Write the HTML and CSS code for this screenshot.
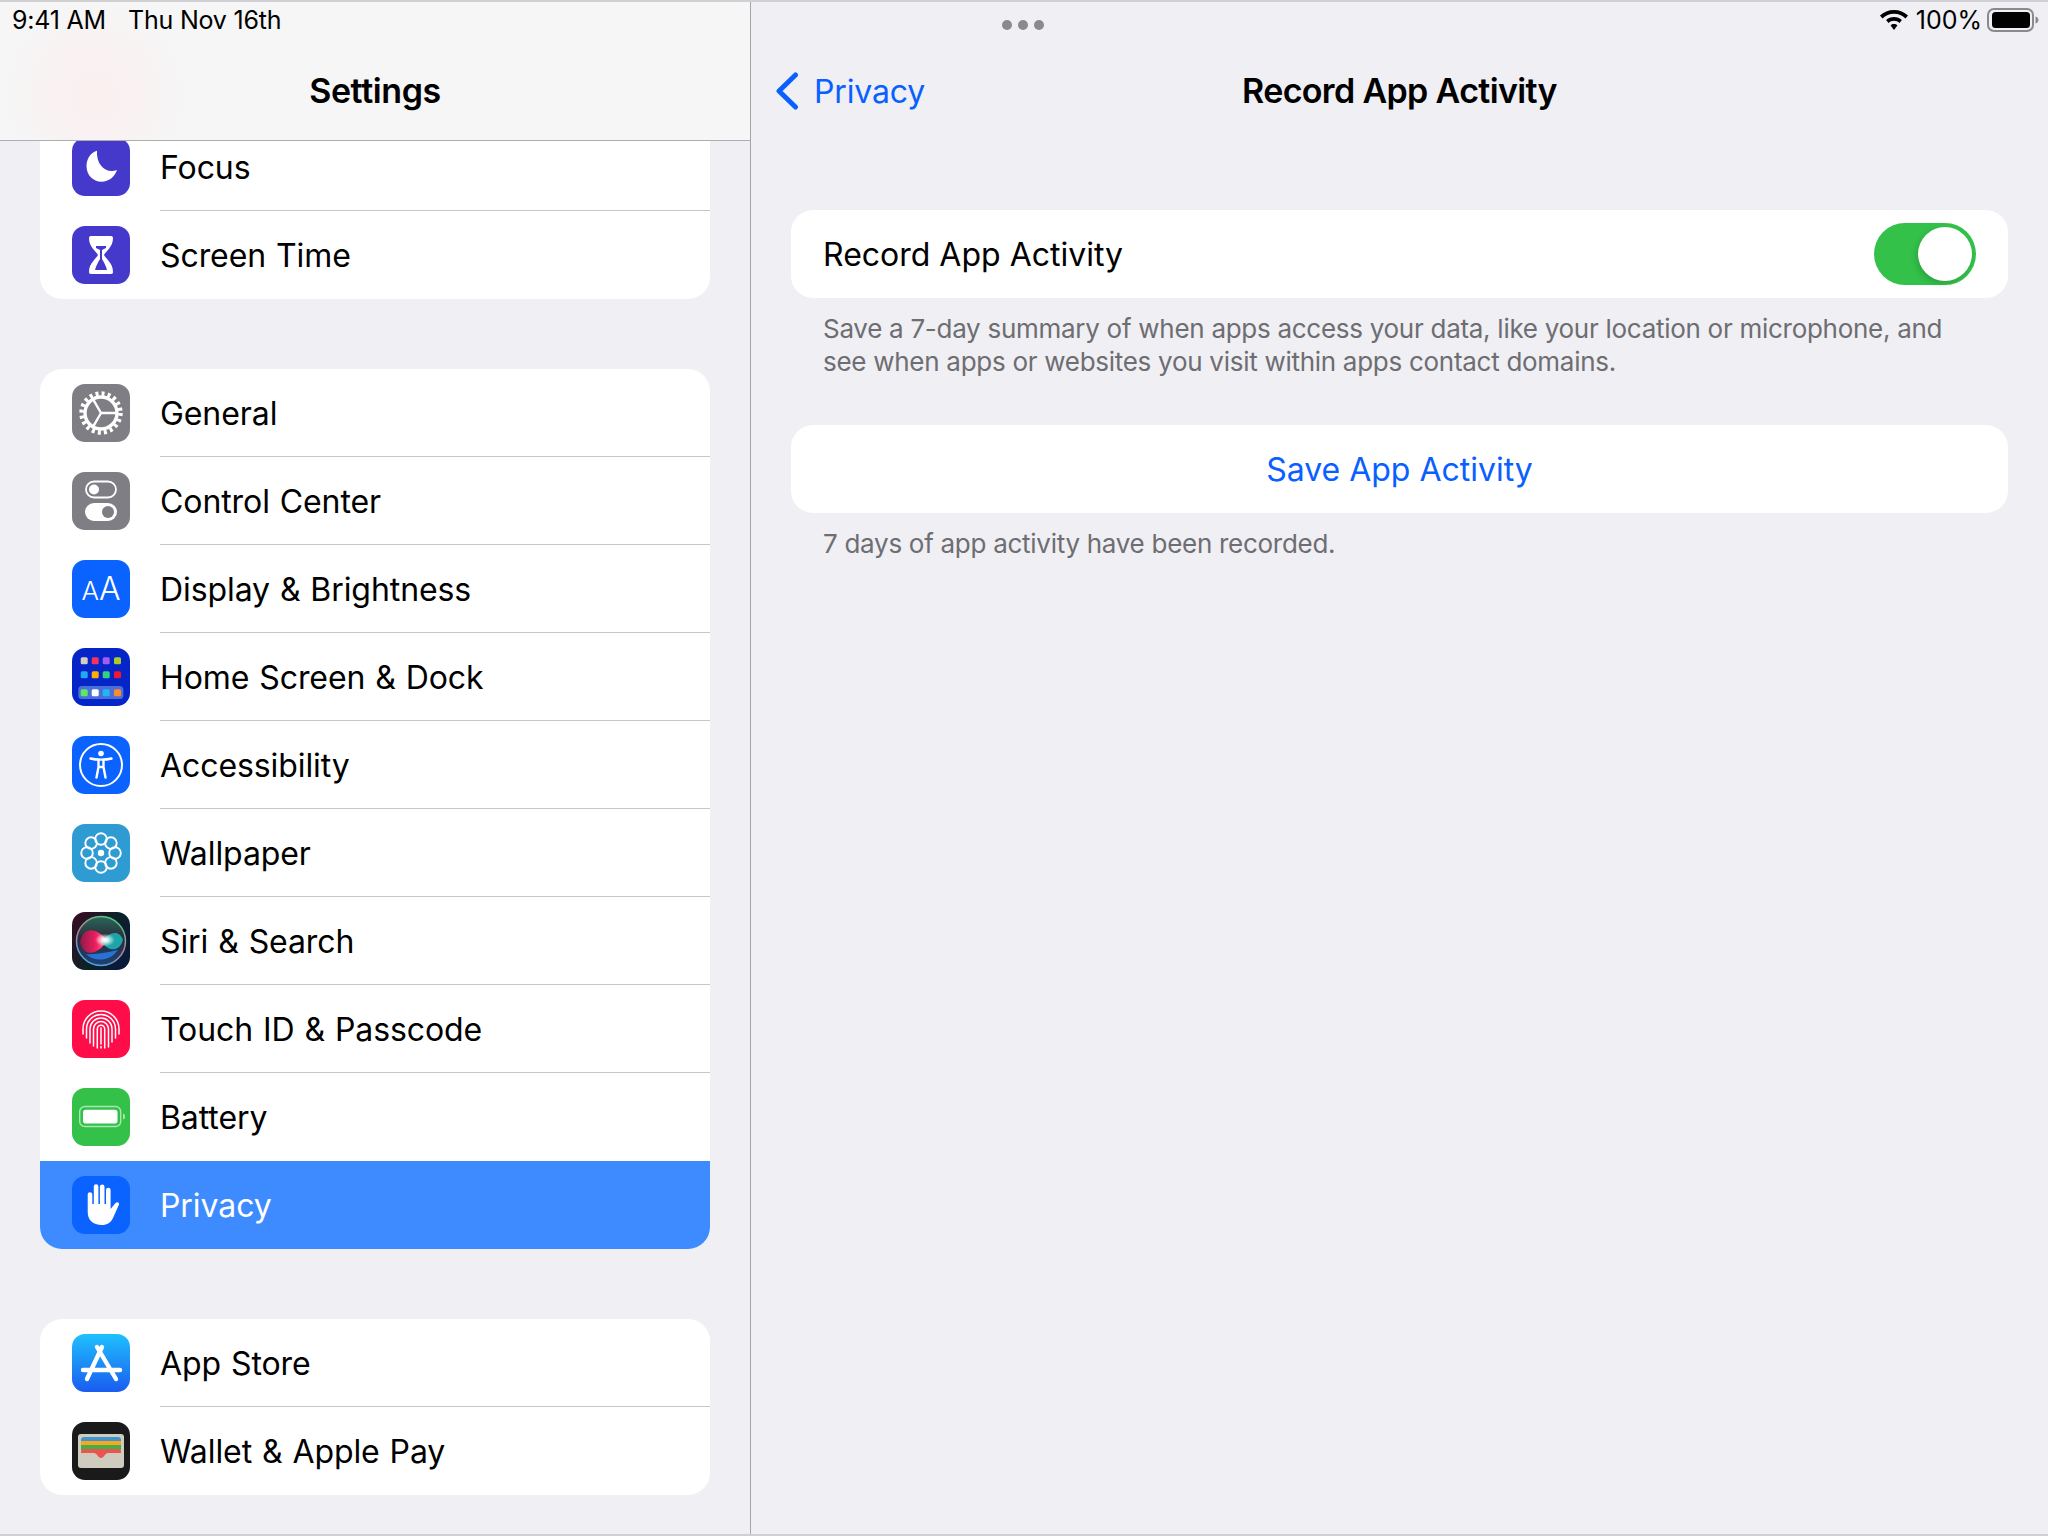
FILE: index.html
```html
<!DOCTYPE html>
<html>
<head>
  <meta charset="utf-8">
  <title>Settings</title>
  <link rel="stylesheet" href="styles.css">
</head>
<body>
  <div class="ipad">
    <aside class="sidebar">
      <header class="side-head">
        <div class="status"><span>9:41 AM</span><span>Thu Nov 16th</span></div>
        <h1 class="nav-title">Settings</h1>
      </header>
      <div class="side-list">
        <div class="group">
          <div class="row">
            <svg class="icon" viewBox="0 0 58 58"><rect width="58" height="58" rx="13" fill="#4539cc"/><path d="M25 12.7C17.500 15 14.500 22 14.500 28C14.500 37 21 43.700 29.500 43.700C37 43.700 42.500 39 45 32C34 36 24 27 25 12.700Z" fill="#fff"/></svg>
            <div class="label">Focus</div>
          </div>
          <div class="row">
            <svg class="icon" viewBox="0 0 58 58"><rect width="58" height="58" rx="13" fill="#4539cc"/><path d="M19 10H39C40.500 10 41 11 41 12C41 21 34 25 32 29C34 33 41 37 41 46C41 47 40.500 48 39 48H19C17.500 48 17 47 17 46C17 37 24 33 26 29C24 25 17 21 17 12C17 11 17.500 10 19 10Z" fill="#fff"/><path d="M24 20H34V22L30 24V33C32 36 34 40 35 44H23C24 40 26 36 28 33V24L24 22Z" fill="#4539cc"/></svg>
            <div class="label">Screen Time</div>
          </div>
        </div>
        <div class="group">
          <div class="row">
            <svg class="icon" viewBox="0 0 58 58"><rect width="58" height="58" rx="13" fill="#7e7e84"/><circle cx="29" cy="29" r="16" fill="none" stroke="#fff" stroke-width="3.400"/><circle cx="29" cy="29" r="19.500" fill="none" stroke="#fff" stroke-width="4.400" stroke-dasharray="3 3.126"/><path d="M29 29H45M29 29L21 15.100M29 29L21 42.900" stroke="#fff" stroke-width="2.400" fill="none"/></svg>
            <div class="label">General</div>
          </div>
          <div class="row">
            <svg class="icon" viewBox="0 0 58 58"><rect width="58" height="58" rx="13" fill="#7e7e84"/><rect x="14" y="9.500" width="30" height="16" rx="8" fill="none" stroke="#fff" stroke-width="1.800"/><circle cx="22" cy="17.500" r="5" fill="#fff"/><rect x="13" y="31" width="32" height="18" rx="9" fill="#fff"/><circle cx="36" cy="40" r="6" fill="#7e7e84"/></svg>
            <div class="label">Control Center</div>
          </div>
          <div class="row">
            <span class="icon icon-aa"><span class="aa-small">A</span><span class="aa-big">A</span></span>
            <div class="label">Display &amp; Brightness</div>
          </div>
          <div class="row">
            <svg class="icon" viewBox="0 0 58 58"><rect width="58" height="58" rx="13" fill="#0625c8"/><rect x="6.300" y="38" width="45" height="13" rx="3.500" fill="#4a6fd8"/>
              <rect x="8.700" y="9.300" width="7" height="7" rx="1.500" fill="#d2cec0"/><rect x="19.700" y="9.300" width="7" height="7" rx="1.500" fill="#f5325b"/><rect x="30.700" y="9.300" width="7" height="7" rx="1.500" fill="#a35cf0"/><rect x="42" y="9.300" width="7" height="7" rx="1.500" fill="#a5cc28"/>
              <rect x="8.700" y="23.300" width="7" height="7" rx="1.500" fill="#22a8f5"/><rect x="19.700" y="23.300" width="7" height="7" rx="1.500" fill="#fdb000"/><rect x="30.700" y="23.300" width="7" height="7" rx="1.500" fill="#33d17c"/><rect x="42" y="23.300" width="7" height="7" rx="1.500" fill="#f5172e"/>
              <rect x="8.700" y="41.300" width="7" height="7" rx="1.500" fill="#5de860"/><rect x="19.700" y="41.300" width="7" height="7" rx="1.500" fill="#fff"/><rect x="30.700" y="41.300" width="7" height="7" rx="1.500" fill="#20b5f5"/><rect x="42" y="41.300" width="7" height="7" rx="1.500" fill="#ff8a2b"/></svg>
            <div class="label">Home Screen &amp; Dock</div>
          </div>
          <div class="row">
            <svg class="icon" viewBox="0 0 58 58"><rect width="58" height="58" rx="13" fill="#0a62ff"/><circle cx="29" cy="29" r="21" fill="none" stroke="#fff" stroke-width="2"/><circle cx="29" cy="17.500" r="2.800" fill="#fff"/><path d="M18.500 22.500C24 24 34 24 39.500 22.500M26.500 24V31L24.500 41.500M31.500 24V31L33.500 41.500M26.500 31H31.500" fill="none" stroke="#fff" stroke-width="2.400" stroke-linecap="round"/></svg>
            <div class="label">Accessibility</div>
          </div>
          <div class="row">
            <svg class="icon" viewBox="0 0 58 58"><rect width="58" height="58" rx="13" fill="#2f9bd3"/><g fill="none" stroke="#fff" stroke-width="1.900"><circle cx="29" cy="15" r="5.800"/><circle cx="29" cy="43" r="5.800"/><circle cx="15" cy="29" r="5.800"/><circle cx="43" cy="29" r="5.800"/><circle cx="19.100" cy="19.100" r="5.800"/><circle cx="38.900" cy="19.100" r="5.800"/><circle cx="19.100" cy="38.900" r="5.800"/><circle cx="38.900" cy="38.900" r="5.800"/></g><circle cx="29" cy="29" r="3.200" fill="#fff"/></svg>
            <div class="label">Wallpaper</div>
          </div>
          <div class="row">
            <svg class="icon" viewBox="0 0 58 58"><defs><linearGradient id="siri-bg" x1="0" y1="0" x2="1" y2="0.600"><stop offset="0" stop-color="#3a0a24"/><stop offset="0.600" stop-color="#0c2226"/><stop offset="1" stop-color="#0a1a3a"/></linearGradient><linearGradient id="siri-fill" x1="0.500" y1="0" x2="0.500" y2="1"><stop offset="0" stop-color="#2a6a58"/><stop offset="0.450" stop-color="#2a2a3a"/><stop offset="1" stop-color="#1a4478"/></linearGradient><linearGradient id="siri-ring" x1="0.800" y1="0" x2="0.300" y2="1"><stop offset="0" stop-color="#45cf8e"/><stop offset="0.500" stop-color="#b8808c"/><stop offset="1" stop-color="#46a8ee"/></linearGradient><linearGradient id="siri-pink" x1="0" y1="0" x2="1" y2="0"><stop offset="0" stop-color="#8f1a48"/><stop offset="0.600" stop-color="#f0205f"/><stop offset="1" stop-color="#ff7fa8"/></linearGradient><radialGradient id="siri-core"><stop offset="0" stop-color="#fff"/><stop offset="0.300" stop-color="#fff" stop-opacity="0.850"/><stop offset="1" stop-color="#fff" stop-opacity="0"/></radialGradient><filter id="siri-soft"><feGaussianBlur stdDeviation="0.700"/></filter></defs><rect width="58" height="58" rx="13" fill="url(#siri-bg)"/><circle cx="29" cy="29" r="25" fill="url(#siri-fill)"/><circle cx="29" cy="29" r="24.500" fill="none" stroke="url(#siri-ring)" stroke-width="1.500"/><g filter="url(#siri-soft)"><path d="M14 42C22 50 38 50 46 38C36 40 24 43 14 42Z" fill="#2a7ff0" opacity="0.800"/><path d="M8 30C11 14 25 15 35 29C25 44 11 45 8 30Z" fill="url(#siri-pink)"/><path d="M30 30C37 19 48 18 51 28C48 39 37 41 30 30Z" fill="#1fa5a8"/></g><ellipse cx="33" cy="28" rx="10" ry="6.500" fill="url(#siri-core)"/></svg>
            <div class="label">Siri &amp; Search</div>
          </div>
          <div class="row">
            <svg class="icon" viewBox="0 0 58 58"><rect width="58" height="58" rx="13" fill="#ff0d48"/><g fill="none" stroke="#fff" stroke-width="1.500" stroke-linecap="round"><path d="M11 34V29A18 18 0 0 1 47 29V34"/><path d="M14.500 38V29A14.500 14.500 0 0 1 43.500 29V38"/><path d="M18 43V29A11 11 0 0 1 40 29V42"/><path d="M21.500 46V29A7.500 7.500 0 0 1 36.500 29V47"/><path d="M25.300 48V29A3.700 3.700 0 0 1 32.700 29V48"/><path d="M29 28V44M29 46.500V48"/></g></svg>
            <div class="label">Touch ID &amp; Passcode</div>
          </div>
          <div class="row">
            <svg class="icon" viewBox="0 0 58 58"><rect width="58" height="58" rx="13" fill="#33c14a"/><rect x="7.700" y="18.500" width="41" height="20" rx="5" fill="none" stroke="#a8e6b2" stroke-width="1.400"/><rect x="11" y="21.700" width="34.500" height="13.800" rx="2.800" fill="#fff"/><path d="M51 25.500C52.500 26 53 27 53 28.500C53 30 52.500 31 51 31.500Z" fill="#a8e6b2"/></svg>
            <div class="label">Battery</div>
          </div>
          <div class="row row-on">
            <svg class="icon" viewBox="0 0 58 58"><rect width="58" height="58" rx="13" fill="#0a62ff"/><path d="M15.700 18.500A2.300 2.300 0 0 1 20.300 18.500V28H21.800V10.500A2.300 2.300 0 0 1 26.400 10.500V28H27.900V10.800A2.300 2.300 0 0 1 32.500 10.800V28H34V14A2.300 2.300 0 0 1 38.600 14V33L43.500 27C45 25.500 47.500 26.500 47 28.500L41 42C39 46.500 35 49 30 49C21 49 15.700 44 15.700 36Z" fill="#fff"/></svg>
            <div class="label">Privacy</div>
          </div>
        </div>
        <div class="group">
          <div class="row">
            <svg class="icon" viewBox="0 0 58 58"><defs><linearGradient id="store-bg" x1="0" y1="0" x2="0" y2="1"><stop offset="0" stop-color="#1fc0fd"/><stop offset="1" stop-color="#1a5cf0"/></linearGradient></defs><rect width="58" height="58" rx="13" fill="url(#store-bg)"/><path d="M30 13L15 45M25 13L44 45M11 36H48" fill="none" stroke="#fff" stroke-width="4.400" stroke-linecap="round"/></svg>
            <div class="label">App Store</div>
          </div>
          <div class="row">
            <svg class="icon" viewBox="0 0 58 58"><rect width="58" height="58" rx="13" fill="#1a1a1a"/><rect x="6" y="12" width="46" height="34" rx="3" fill="#cfccbf"/><path d="M9 18A3 3 0 0 1 12 15H46A3 3 0 0 1 49 18V21H9Z" fill="#3f95cf"/><rect x="9" y="19" width="40" height="5" fill="#f6a821"/><rect x="9" y="23" width="40" height="5" fill="#47ad45"/><path d="M9 30A3 3 0 0 1 12 27H46A3 3 0 0 1 49 30V31H36C33 31 32 36 29 36C26 36 25 31 22 31H9Z" fill="#ea5550"/></svg>
            <div class="label">Wallet &amp; Apple Pay</div>
          </div>
        </div>
      </div>
    </aside>
    <main class="detail">
      <header class="detail-head">
        <div class="status status-right">
          <div class="dots"><i></i><i></i><i></i></div>
          <svg class="wifi" viewBox="0 0 28 20"><path d="M14 0C19.500 0 24.300 2 28 5.500L25.500 8.400C22.500 5.500 18.500 3.800 14 3.800C9.500 3.800 5.500 5.500 2.500 8.400L0 5.500C3.700 2 8.500 0 14 0Z"/><path d="M14 7C17 7 19.800 8.100 21.900 10.100L19.500 12.900C18 11.500 16.100 10.700 14 10.700C11.900 10.700 10 11.500 8.500 12.900L6.100 10.100C8.200 8.100 11 7 14 7Z"/><path d="M14 14C15.300 14 16.500 14.500 17.400 15.400L14 20L10.600 15.400C11.500 14.500 12.700 14 14 14Z"/></svg>
          <span class="pct">100%</span>
          <svg class="batt" viewBox="0 0 52 24"><rect x="1" y="1" width="45" height="22" rx="6" fill="none" stroke="#8a8a8e" stroke-width="2"/><rect x="5" y="4" width="38" height="16" rx="3.500"/><path d="M48.500 8.500C50.500 9 51.500 10.500 51.500 12C51.500 13.500 50.500 15 48.500 15.500Z" fill="#8a8a8e"/></svg>
        </div>
        <div class="detail-nav">
          <a class="back"><svg class="chev" viewBox="0 0 24 38"><path d="M20.500 3L4 19L20.500 35" fill="none" stroke="#0a60ff" stroke-width="5" stroke-linecap="round" stroke-linejoin="round"/></svg>Privacy</a>
          <h1 class="nav-title">Record App Activity</h1>
          <span></span>
        </div>
      </header>
      <section class="form">
        <div class="card card-switch">
          <span>Record App Activity</span>
          <div class="switch"><div class="knob"></div></div>
        </div>
        <p class="note">Save a 7-day summary of when apps access your data, like your location or microphone, and<br>see when apps or websites you visit within apps contact domains.</p>
        <div class="card card-btn">Save App Activity</div>
        <p class="note">7 days of app activity have been recorded.</p>
      </section>
    </main>
  </div>
</body>
</html>
```
FILE: styles.css
```css
* {
  box-sizing: border-box;
}
html, body {
  margin: 0;
  height: 100%;
}
body {
  font-family: Inter, "Liberation Sans", sans-serif;
  color: #000;
  background: #efeff4;
}
.ipad {
  display: grid;
  grid-template-columns: 751px 1fr;
  height: 1536px;
  overflow: hidden;
  border-top: 2px solid #cfcfd4;
  border-bottom: 2px solid #cfcfd4;
}

/* shared */
.status {
  display: flex;
  gap: 22px;
  height: 38px;
  padding: 2px 0 0 12px;
  font-size: 25px;
  line-height: 32px;
  letter-spacing: -0.2px;
}
.nav-title {
  margin: 0;
  font-size: 34px;
  line-height: 60px;
  font-weight: 600;
  letter-spacing: -0.4px;
  text-align: center;
}

/* left column */
.sidebar {
  border-right: 1px solid #a5a5a9;
  overflow: hidden;
}
.side-head {
  position: relative;
  z-index: 1;
  height: 139px;
  border-bottom: 1px solid #aeaeb2;
  background: radial-gradient(ellipse 90px 100px at 95px 95px, #fbeeef, rgba(251, 238, 239, 0) 100%), #f6f6f6;
}
.side-head .nav-title {
  margin-top: 21px;
}
.side-list {
  margin-top: -18px;
  padding: 0 40px;
}
.group {
  margin-bottom: 70px;
  background: #fff;
  border-radius: 22px;
  overflow: hidden;
}
.row {
  display: flex;
  align-items: center;
  gap: 30px;
  height: 88px;
  padding-left: 32px;
  font-size: 32px;
  letter-spacing: -0.08px;
  word-spacing: 1px;
}
.icon {
  flex: none;
  width: 58px;
  height: 58px;
}
.label {
  flex: 1;
  display: flex;
  align-items: center;
  height: 100%;
  padding-top: 1px;
  border-bottom: 1px solid #c6c6c8;
}
.row:last-child .label,
.row:has(+ .row-on) .label {
  border-bottom: 0;
}
.row-on {
  color: #fff;
  background: #3e8bff;
}
.icon-aa {
  display: flex;
  align-items: baseline;
  justify-content: center;
  border-radius: 13px;
  background: #0a62ff;
  color: #fff;
  line-height: 58px;
  font-weight: 300;
}
.aa-small {
  font-size: 26px;
}
.aa-big {
  font-size: 32px;
}

/* right column */
.detail-head {
  height: 138px;
}
.status-right {
  align-items: flex-start;
  gap: 0;
  padding: 2px 9px 0 0;
}
.dots {
  display: flex;
  gap: 6px;
  margin: 16px auto 0 251px;
}
.dots i {
  width: 10px;
  height: 10px;
  border-radius: 50%;
  background: #8a8a8e;
}
.wifi {
  width: 28px;
  height: 20px;
  margin-top: 6px;
}
.pct {
  margin: 0 5px 0 8px;
  letter-spacing: 0;
}
.batt {
  width: 52px;
  height: 24px;
  margin-top: 4px;
}
.detail-nav {
  display: grid;
  grid-template-columns: 1fr auto 1fr;
  align-items: center;
  margin-top: 21px;
}
.detail-nav .nav-title {
  letter-spacing: -0.65px;
}
.back {
  display: flex;
  align-items: center;
  gap: 15px;
  padding-left: 24px;
  font-size: 32px;
  letter-spacing: -0.15px;
  color: #0a60ff;
}
.chev {
  width: 24px;
  height: 38px;
}
.form {
  padding: 70px 40px 0;
}
.card {
  display: flex;
  align-items: center;
  height: 88px;
  border-radius: 22px;
  background: #fff;
  font-size: 32px;
}
.card-switch {
  justify-content: space-between;
  padding: 0 32px;
}
.card-btn {
  justify-content: center;
  color: #0a60ff;
}
.switch {
  display: flex;
  justify-content: flex-end;
  align-items: center;
  width: 102px;
  height: 62px;
  padding-right: 4px;
  border-radius: 31px;
  background: #33c14a;
}
.knob {
  width: 54px;
  height: 54px;
  border-radius: 50%;
  background: #fff;
  box-shadow: -2px 3px 6px rgba(0, 0, 0, 0.15);
}
.note {
  margin: 0;
  padding: 14px 32px 47px;
  font-size: 26px;
  line-height: 33px;
  letter-spacing: -0.28px;
  color: #6d6d72;
}
```
